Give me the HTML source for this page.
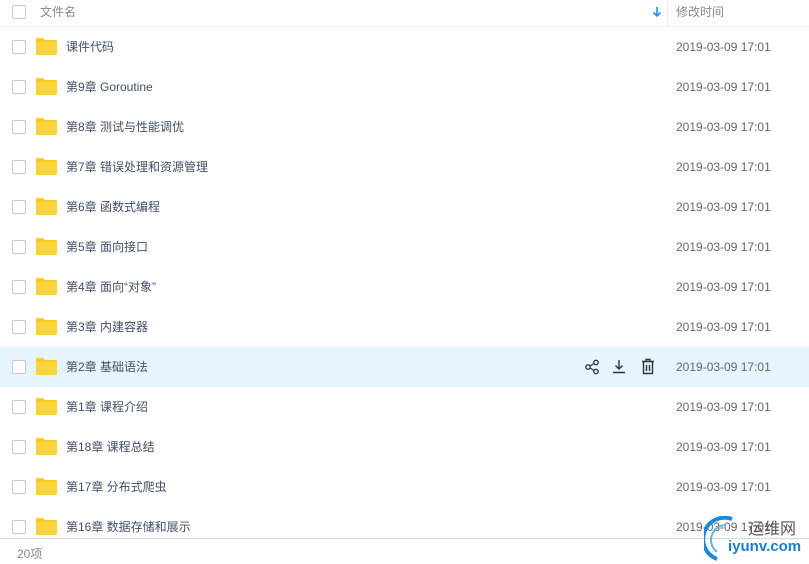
<!DOCTYPE html>
<html><head><meta charset="utf-8">
<style>
*{margin:0;padding:0;box-sizing:border-box}
body{width:809px;height:564px;background:#fff;font-family:"Liberation Sans","Noto Sans CJK SC",sans-serif;font-size:12px;line-height:16px;color:#424e67;position:relative;overflow:hidden}
.hdr{position:absolute;left:0;top:0;width:809px;height:27px;border-bottom:1px solid #f0f0f0}
.cb{position:absolute;left:12px;width:14px;height:14px;border:1px solid #c9c9c9;border-radius:2px;background:#fff}
.row{position:absolute;left:0;width:809px;height:40px}
.row.hl{background:#e5f4fd}
.fold{position:absolute;left:36px;top:11px;width:21px;height:17px}
.name{position:absolute;left:66px;top:12px;color:#424e67;white-space:nowrap}
.date{position:absolute;left:676px;top:12px;color:#666;white-space:nowrap}
.foot{position:absolute;left:0;top:538px;width:809px;border-top:1px solid #d8d8e0;height:26px}
</style></head><body>
<div class="hdr">
<div class="cb" style="top:5px"></div>
<div style="position:absolute;left:40px;top:4px;color:#888">文件名</div>
<svg style="position:absolute;left:652px;top:6px" width="10" height="12" viewBox="0 0 10 12"><path d="M5 1v9M1.5 6.5L5 10l3.5-3.5" stroke="#1e90ff" stroke-width="1.6" fill="none"/></svg>
<div style="position:absolute;left:667px;top:0;width:1px;height:27px;background:#eee"></div>
<div style="position:absolute;left:676px;top:4px;color:#888">修改时间</div>
</div>
<div id="rows"></div>
<script>
var n=["课件代码","第9章 Goroutine","第8章 测试与性能调优","第7章 错误处理和资源管理","第6章 函数式编程","第5章 面向接口","第4章 面向“对象”","第3章 内建容器","第2章 基础语法","第1章 课程介绍","第18章 课程总结","第17章 分布式爬虫","第16章 数据存储和展示"];
var h="";
for(var i=0;i<n.length;i++){
var t=27+i*40;
h+='<div class="row'+(i==8?' hl':'')+'" style="top:'+t+'px"><div class="cb" style="top:13px"></div>'+
'<svg class="fold" viewBox="0 0 21 17"><path d="M0 1.5Q0 0 1.5 0H7l2 2h10.5Q21 2 21 3.5V15.5Q21 17 19.5 17H1.5Q0 17 0 15.5Z" fill="#f9ca24"/><path d="M0 4H21V15.5Q21 17 19.5 17H1.5Q0 17 0 15.5Z" fill="#fcd33a"/></svg>'+
'<div class="name">'+n[i]+'</div>'+(i==12?'':'<div class="date">2019-03-09 17:01</div>')+
(i==8?'<svg style="position:absolute;left:585px;top:12px" width="14" height="16" viewBox="0 0 14 16"><circle cx="3" cy="8" r="2.2" fill="none" stroke="#333" stroke-width="1.3"/><circle cx="11" cy="3.5" r="2.2" fill="none" stroke="#333" stroke-width="1.3"/><circle cx="11" cy="12.5" r="2.2" fill="none" stroke="#333" stroke-width="1.3"/><path d="M5 7l4-2.5M5 9l4 2.5" stroke="#333" stroke-width="1.3"/></svg>'+
'<svg style="position:absolute;left:612px;top:12px" width="14" height="16" viewBox="0 0 14 16"><path d="M7 1v9M3.5 6.5L7 10l3.5-3.5M1 13.5h12" stroke="#333" stroke-width="1.4" fill="none"/></svg>'+
'<svg style="position:absolute;left:641px;top:11px" width="14" height="17" viewBox="0 0 14 17"><path d="M1 3.5h12M5 3.5V1.5h4v2M2.5 3.5v12h9v-12M5.5 7v6M8.5 7v6" stroke="#333" stroke-width="1.4" fill="none"/></svg>':'')+
'</div>';}
document.getElementById("rows").innerHTML=h;
</script>
<div style="position:absolute;left:676px;top:519px;color:#666;font-size:12px">2019-03-09 17:01</div>
<div class="foot"><div style="position:absolute;left:17px;top:7px;color:#888">20项</div></div>
<svg style="position:absolute;left:704px;top:516px" width="36" height="46" viewBox="0 0 36 46"><path d="M28 3A20 20 0 0 0 13 43" stroke="#1a8ad8" stroke-width="4" fill="none"/><path d="M22 9A15 15 0 0 0 13 36" stroke="#5fb4ea" stroke-width="2" fill="none"/></svg>
<div style="position:absolute;left:748px;top:517px;font-size:16px;line-height:20px;color:#555;font-family:'Noto Sans CJK SC',sans-serif">运维网</div>
<div style="position:absolute;left:728px;top:538px;font-size:15px;line-height:18px;font-weight:bold;color:#1a7fd0">iyunv.com</div>
</body></html>
